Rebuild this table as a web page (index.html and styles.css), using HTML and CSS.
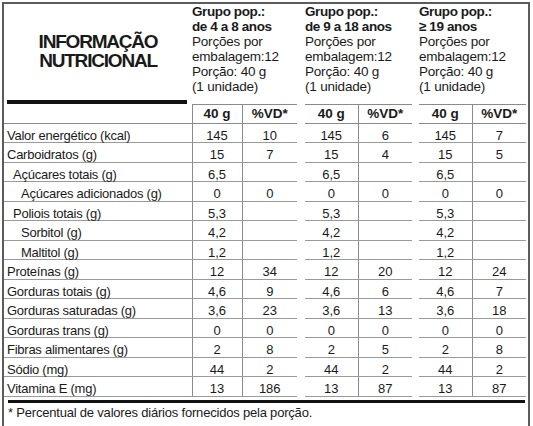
FILE: index.html
```html
<!DOCTYPE html>
<html lang="pt-BR">
<head>
    <meta charset="UTF-8">
    <meta name="viewport" content="width=device-width, initial-scale=1.0">
    <title>Informação Nutricional</title>
    <link rel="stylesheet" href="styles.css">
</head>
<body>
    <div class="label">
        <table class="facts">
            <colgroup>
                <col class="c-name">
                <col class="c-qty1"><col class="c-vd1"><col class="c-gap1">
                <col class="c-qty"><col class="c-vd"><col class="c-gap2">
                <col class="c-qty"><col class="c-vd"><col class="c-end">
            </colgroup>
            <thead>
                <tr class="groups">
                    <th class="title-cell">
                        <h1>INFORMAÇÃO<br>NUTRICIONAL</h1>
                        <div class="bar"></div>
                    </th>
                    <th colspan="2" class="group">
                        <b>Grupo pop.:<br>de 4 a 8 anos</b><br>
                        Porções por<br>embalagem:12<br>Porção: 40 g<br>(1 unidade)
                    </th>
                    <th class="gap"></th>
                    <th colspan="2" class="group">
                        <b>Grupo pop.:<br>de 9 a 18 anos</b><br>
                        Porções por<br>embalagem:12<br>Porção: 40 g<br>(1 unidade)
                    </th>
                    <th class="gap"></th>
                    <th colspan="2" class="group">
                        <b>Grupo pop.:<br>≥ 19 anos</b><br>
                        Porções por<br>embalagem:12<br>Porção: 40 g<br>(1 unidade)
                    </th>
                    <th class="gap"></th>
                </tr>
                <tr class="units">
                    <th class="name"></th>
                    <th class="qty first">40 g</th><th class="vd">%VD*</th><th class="gap"></th>
                    <th class="qty">40 g</th><th class="vd">%VD*</th><th class="gap"></th>
                    <th class="qty">40 g</th><th class="vd">%VD*</th><th class="gap"></th>
                </tr>
            </thead>
            <tbody>
                <tr>
                    <td class="name">Valor energético (kcal)</td>
                    <td class="first">145</td><td class="vd">10</td><td class="gap"></td>
                    <td>145</td><td class="vd">6</td><td class="gap"></td>
                    <td>145</td><td class="vd">7</td><td class="gap"></td>
                </tr>
                <tr>
                    <td class="name">Carboidratos (g)</td>
                    <td class="first">15</td><td class="vd">7</td><td class="gap"></td>
                    <td>15</td><td class="vd">4</td><td class="gap"></td>
                    <td>15</td><td class="vd">5</td><td class="gap"></td>
                </tr>
                <tr>
                    <td class="name sub">Açúcares totais (g)</td>
                    <td class="first">6,5</td><td class="vd"></td><td class="gap"></td>
                    <td>6,5</td><td class="vd"></td><td class="gap"></td>
                    <td>6,5</td><td class="vd"></td><td class="gap"></td>
                </tr>
                <tr>
                    <td class="name subsub">Açúcares adicionados (g)</td>
                    <td class="first">0</td><td class="vd">0</td><td class="gap"></td>
                    <td>0</td><td class="vd">0</td><td class="gap"></td>
                    <td>0</td><td class="vd">0</td><td class="gap"></td>
                </tr>
                <tr>
                    <td class="name sub">Poliois totais (g)</td>
                    <td class="first">5,3</td><td class="vd"></td><td class="gap"></td>
                    <td>5,3</td><td class="vd"></td><td class="gap"></td>
                    <td>5,3</td><td class="vd"></td><td class="gap"></td>
                </tr>
                <tr>
                    <td class="name subsub">Sorbitol (g)</td>
                    <td class="first">4,2</td><td class="vd"></td><td class="gap"></td>
                    <td>4,2</td><td class="vd"></td><td class="gap"></td>
                    <td>4,2</td><td class="vd"></td><td class="gap"></td>
                </tr>
                <tr>
                    <td class="name subsub">Maltitol (g)</td>
                    <td class="first">1,2</td><td class="vd"></td><td class="gap"></td>
                    <td>1,2</td><td class="vd"></td><td class="gap"></td>
                    <td>1,2</td><td class="vd"></td><td class="gap"></td>
                </tr>
                <tr>
                    <td class="name">Proteínas (g)</td>
                    <td class="first">12</td><td class="vd">34</td><td class="gap"></td>
                    <td>12</td><td class="vd">20</td><td class="gap"></td>
                    <td>12</td><td class="vd">24</td><td class="gap"></td>
                </tr>
                <tr>
                    <td class="name">Gorduras totais (g)</td>
                    <td class="first">4,6</td><td class="vd">9</td><td class="gap"></td>
                    <td>4,6</td><td class="vd">6</td><td class="gap"></td>
                    <td>4,6</td><td class="vd">7</td><td class="gap"></td>
                </tr>
                <tr>
                    <td class="name">Gorduras saturadas (g)</td>
                    <td class="first">3,6</td><td class="vd">23</td><td class="gap"></td>
                    <td>3,6</td><td class="vd">13</td><td class="gap"></td>
                    <td>3,6</td><td class="vd">18</td><td class="gap"></td>
                </tr>
                <tr>
                    <td class="name">Gorduras trans (g)</td>
                    <td class="first">0</td><td class="vd">0</td><td class="gap"></td>
                    <td>0</td><td class="vd">0</td><td class="gap"></td>
                    <td>0</td><td class="vd">0</td><td class="gap"></td>
                </tr>
                <tr>
                    <td class="name">Fibras alimentares (g)</td>
                    <td class="first">2</td><td class="vd">8</td><td class="gap"></td>
                    <td>2</td><td class="vd">5</td><td class="gap"></td>
                    <td>2</td><td class="vd">8</td><td class="gap"></td>
                </tr>
                <tr>
                    <td class="name">Sódio (mg)</td>
                    <td class="first">44</td><td class="vd">2</td><td class="gap"></td>
                    <td>44</td><td class="vd">2</td><td class="gap"></td>
                    <td>44</td><td class="vd">2</td><td class="gap"></td>
                </tr>
                <tr>
                    <td class="name">Vitamina E (mg)</td>
                    <td class="first">13</td><td class="vd">186</td><td class="gap"></td>
                    <td>13</td><td class="vd">87</td><td class="gap"></td>
                    <td>13</td><td class="vd">87</td><td class="gap"></td>
                </tr>
            </tbody>
        </table>
        <div class="rule"></div>
        <p class="note">* Percentual de valores diários fornecidos pela porção.</p>
    </div>
</body>
</html>
```

FILE: styles.css
```css
body {
    margin: 2px;
    font-family: "Liberation Sans", Arial, sans-serif;
    color: #1a1a1a;
    background: #fff;
}
.label {
    width: 524px;
    border: 2px solid #5c5c5c;
}
.facts {
    width: 524px;
    border-collapse: collapse;
    table-layout: fixed;
    font-size: 13px;
}
.c-name { width: 188px; }
.c-qty1 { width: 50px; }
.c-vd1 { width: 55px; }
.c-gap1 { width: 8px; }
.c-qty { width: 53px; }
.c-vd { width: 54px; }
.c-gap2 { width: 7px; }
.c-end { width: 2px; }

.facts th, .facts td {
    padding: 0;
}
.title-cell {
    vertical-align: top;
}
h1 {
    margin: 28px 0 0;
    font-size: 19px;
    line-height: 19px;
    letter-spacing: -1.2px;
    text-align: center;
}
.bar {
    height: 4px;
    background: #111;
    margin: 30px 5px 0 3px;
}
.group {
    vertical-align: top;
    text-align: left;
    font-weight: normal;
    font-size: 13.5px;
    padding: 9px 0 0 1px;
    line-height: 15.1px;
    letter-spacing: -0.2px;
    white-space: nowrap;
}
.group b {
    letter-spacing: -0.4px;
}
.units th {
    height: 18px;
    font-size: 13.5px;
    font-weight: bold;
    border-bottom: 1px solid #8a8a8a;
}
.units .qty, .units .vd {
    border-top: 1px solid #8a8a8a;
}
.units .gap {
    border: none;
}
.facts td {
    padding-top: 5px;
    line-height: 13.5px;
    text-align: center;
    border-bottom: 1px solid #9a9a9a;
}
.facts td.name {
    text-align: left;
    padding-left: 3px;
    letter-spacing: -0.25px;
}
.facts td.sub {
    padding-left: 9px;
}
.facts td.subsub {
    padding-left: 17px;
}
.facts td.gap {
    border-bottom: none;
}
.facts .first {
    border-left: 1px solid #8a8a8a;
}
.facts .vd {
    border-left: 1px solid #8a8a8a;
}
.rule {
    height: 3px;
    background: #111;
    margin: 3px 3px 0 4px;
}
.note {
    margin: 0;
    padding: 2px 4px 6px;
    font-size: 13px;
    letter-spacing: -0.2px;
}
```
